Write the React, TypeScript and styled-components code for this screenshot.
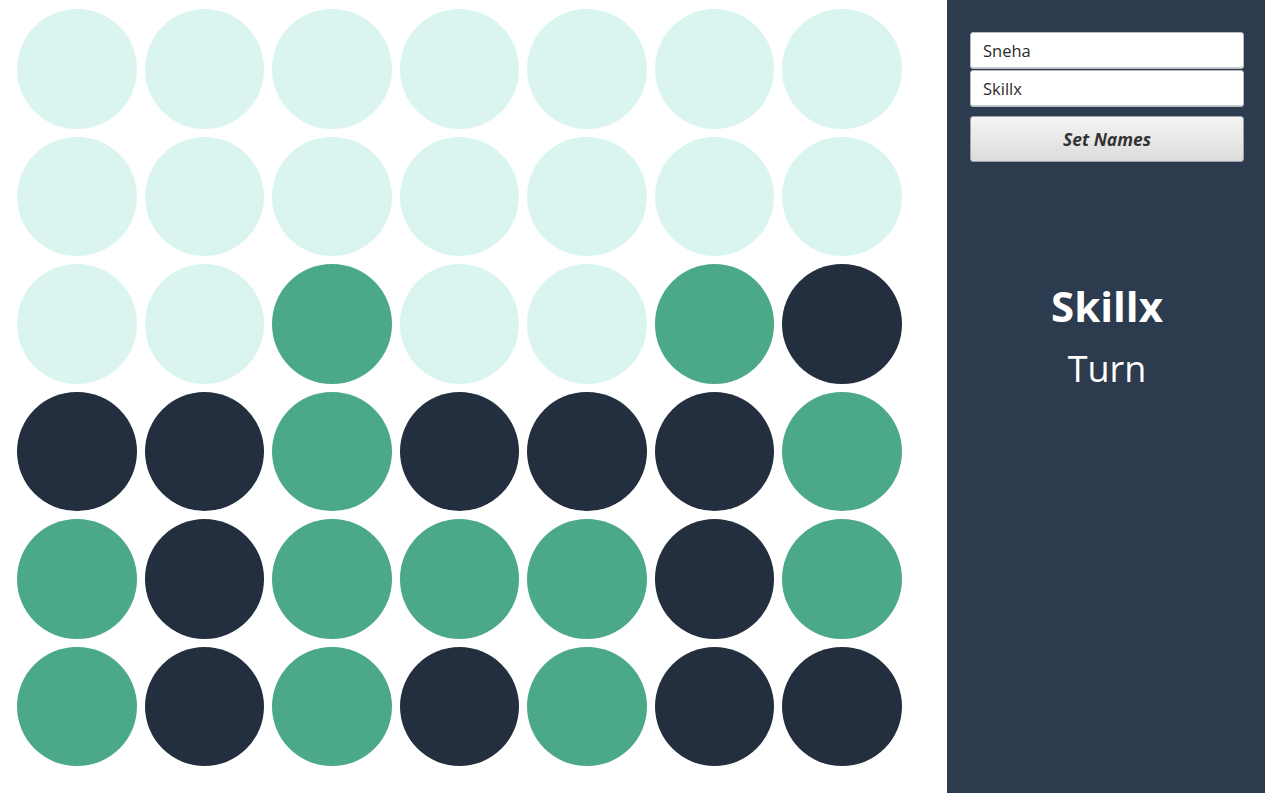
import React from "react";
import styled, { createGlobalStyle } from "styled-components";

const Global = createGlobalStyle`
  html, body { margin: 0; padding: 0; background: #ffffff; }
  body { font-family: "Open Sans", "Noto Sans", sans-serif; }
`;

const Layout = styled.div`
  display: flex;
  width: 1265px;
  height: 793px;
  overflow: hidden;
`;

const Board = styled.div`
  flex: 0 0 947px;
  background: #ffffff;
  display: grid;
  grid-template-columns: repeat(7, 120px);
  grid-auto-rows: 120px;
  column-gap: 7.5px;
  row-gap: 7.5px;
  padding: 9px 0 0 17px;
  box-sizing: border-box;
  align-content: start;
`;

type Kind = "L" | "G" | "D";
const colors: Record<Kind, string> = {
  L: "#daf5f0",
  G: "#4ca987",
  D: "#232f3e",
};

const Disc = styled.div<{ $kind: Kind }>`
  width: 119.5px;
  height: 119.5px;
  border-radius: 50%;
  background: ${(p) => colors[p.$kind]};
`;

const Panel = styled.div`
  flex: 1;
  background: #2c3b4d;
  display: flex;
  flex-direction: column;
  padding: 32px 21px 0 23px;
  box-sizing: border-box;
`;

const Input = styled.input`
  height: 37px;
  width: 274px;
  box-sizing: border-box;
  border: 1px solid #b8bcc2;
  border-radius: 3px;
  background: #ffffff;
  box-shadow: inset 0 -1px 0 #c9ccd0;
  padding: 0 12px;
  font-family: "Open Sans", "Noto Sans", sans-serif;
  font-size: 16.5px;
  color: #2b2b2b;
  outline: none;
  margin-bottom: 1px;
`;

const Button = styled.button`
  margin-top: 8px;
  height: 46px;
  width: 274px;
  border: 1px solid #9ea3a8;
  border-radius: 3px;
  background: linear-gradient(#f4f4f4, #dcdcdc);
  font-family: "Open Sans", "Noto Sans", sans-serif;
  font-weight: 700;
  font-style: italic;
  font-size: 17.5px;
  color: #333333;
  cursor: pointer;
`;

const Status = styled.div`
  margin-top: 118px;
  display: flex;
  flex-direction: column;
  align-items: center;
  color: #ffffff;
`;

const Name = styled.div`
  font-size: 42px;
  font-weight: 700;
  line-height: 52px;
`;

const Turn = styled.div`
  font-size: 36px;
  font-weight: 400;
  line-height: 44px;
  margin-top: 15px;
`;

const grid: Kind[][] = [
  ["L", "L", "L", "L", "L", "L", "L"],
  ["L", "L", "L", "L", "L", "L", "L"],
  ["L", "L", "G", "L", "L", "G", "D"],
  ["D", "D", "G", "D", "D", "D", "G"],
  ["G", "D", "G", "G", "G", "D", "G"],
  ["G", "D", "G", "D", "G", "D", "D"],
];

export default function App() {
  return (
    <>
      <Global />
      <Layout>
        <Board>
          {grid.flatMap((row, r) =>
            row.map((k, c) => <Disc key={`${r}-${c}`} $kind={k} />)
          )}
        </Board>
        <Panel>
          <Input defaultValue="Sneha" />
          <Input defaultValue="Skillx" />
          <Button>Set Names</Button>
          <Status>
            <Name>Skillx</Name>
            <Turn>Turn</Turn>
          </Status>
        </Panel>
      </Layout>
    </>
  );
}
